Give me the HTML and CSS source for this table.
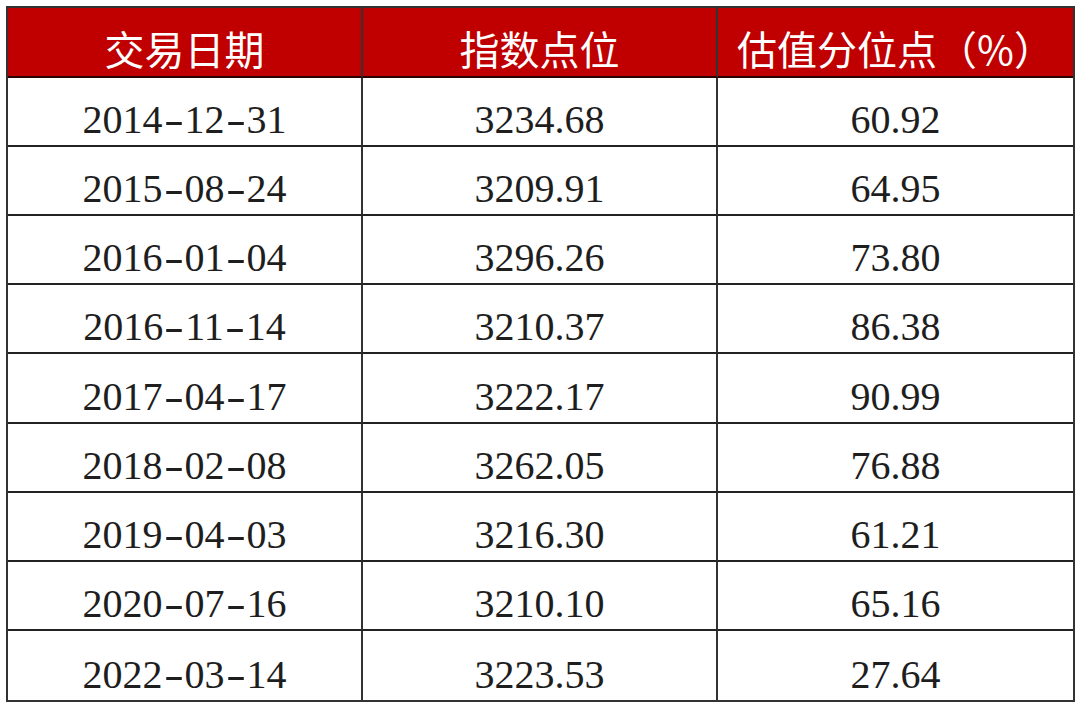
FILE: index.html
```html
<!DOCTYPE html>
<html lang="zh-CN">
<head>
<meta charset="utf-8">
<title>估值分位点</title>
<link rel="stylesheet" href="styles.css">
</head>
<body>
<div class="sheet">
  <div class="cell head">交易日期</div>
  <div class="cell head">指数点位</div>
  <div class="cell head">估值分位点（%）</div>

  <div class="cell">2014<span class="d">-</span>12<span class="d">-</span>31</div>
  <div class="cell">3234.68</div>
  <div class="cell">60.92</div>

  <div class="cell">2015<span class="d">-</span>08<span class="d">-</span>24</div>
  <div class="cell">3209.91</div>
  <div class="cell">64.95</div>

  <div class="cell">2016<span class="d">-</span>01<span class="d">-</span>04</div>
  <div class="cell">3296.26</div>
  <div class="cell">73.80</div>

  <div class="cell">2016<span class="d">-</span>11<span class="d">-</span>14</div>
  <div class="cell">3210.37</div>
  <div class="cell">86.38</div>

  <div class="cell">2017<span class="d">-</span>04<span class="d">-</span>17</div>
  <div class="cell">3222.17</div>
  <div class="cell">90.99</div>

  <div class="cell">2018<span class="d">-</span>02<span class="d">-</span>08</div>
  <div class="cell">3262.05</div>
  <div class="cell">76.88</div>

  <div class="cell">2019<span class="d">-</span>04<span class="d">-</span>03</div>
  <div class="cell">3216.30</div>
  <div class="cell">61.21</div>

  <div class="cell">2020<span class="d">-</span>07<span class="d">-</span>16</div>
  <div class="cell">3210.10</div>
  <div class="cell">65.16</div>

  <div class="cell last">2022<span class="d">-</span>03<span class="d">-</span>14</div>
  <div class="cell last">3223.53</div>
  <div class="cell last">27.64</div>
</div>
</body>
</html>
```
FILE: styles.css
```css
html, body {
  margin: 0;
  padding: 0;
  background: #ffffff;
}

.sheet {
  margin: 6px 0 0 6px;
  width: 1065px;
  height: 692px;
  border: 2px solid #333333;
  display: grid;
  grid-template-columns: 355px 355px 355px;
  grid-template-rows: 70px repeat(9, 1fr);
}

.cell {
  display: flex;
  align-items: flex-end;
  justify-content: center;
  padding-bottom: 5px;
  border-right: 2px solid #333333;
  border-bottom: 2px solid #222222;
  font-family: "Liberation Serif", "Noto Sans CJK SC", serif;
  font-size: 40px;
  line-height: 1;
  color: #1e1e1e;
  box-sizing: border-box;
  white-space: nowrap;
}

.cell:nth-child(3n) {
  border-right: none;
}

.cell.last {
  border-bottom: none;
}

.head {
  background: #c00000;
  color: #ffffff;
  font-family: "Noto Sans CJK SC", sans-serif;
  font-size: 40px;
  padding-bottom: 8px;
  border-bottom-color: #2a0000;
}

.d {
  display: inline-block;
  width: 0.55em;
  text-align: center;
  transform: scaleX(1.5);
}
```
